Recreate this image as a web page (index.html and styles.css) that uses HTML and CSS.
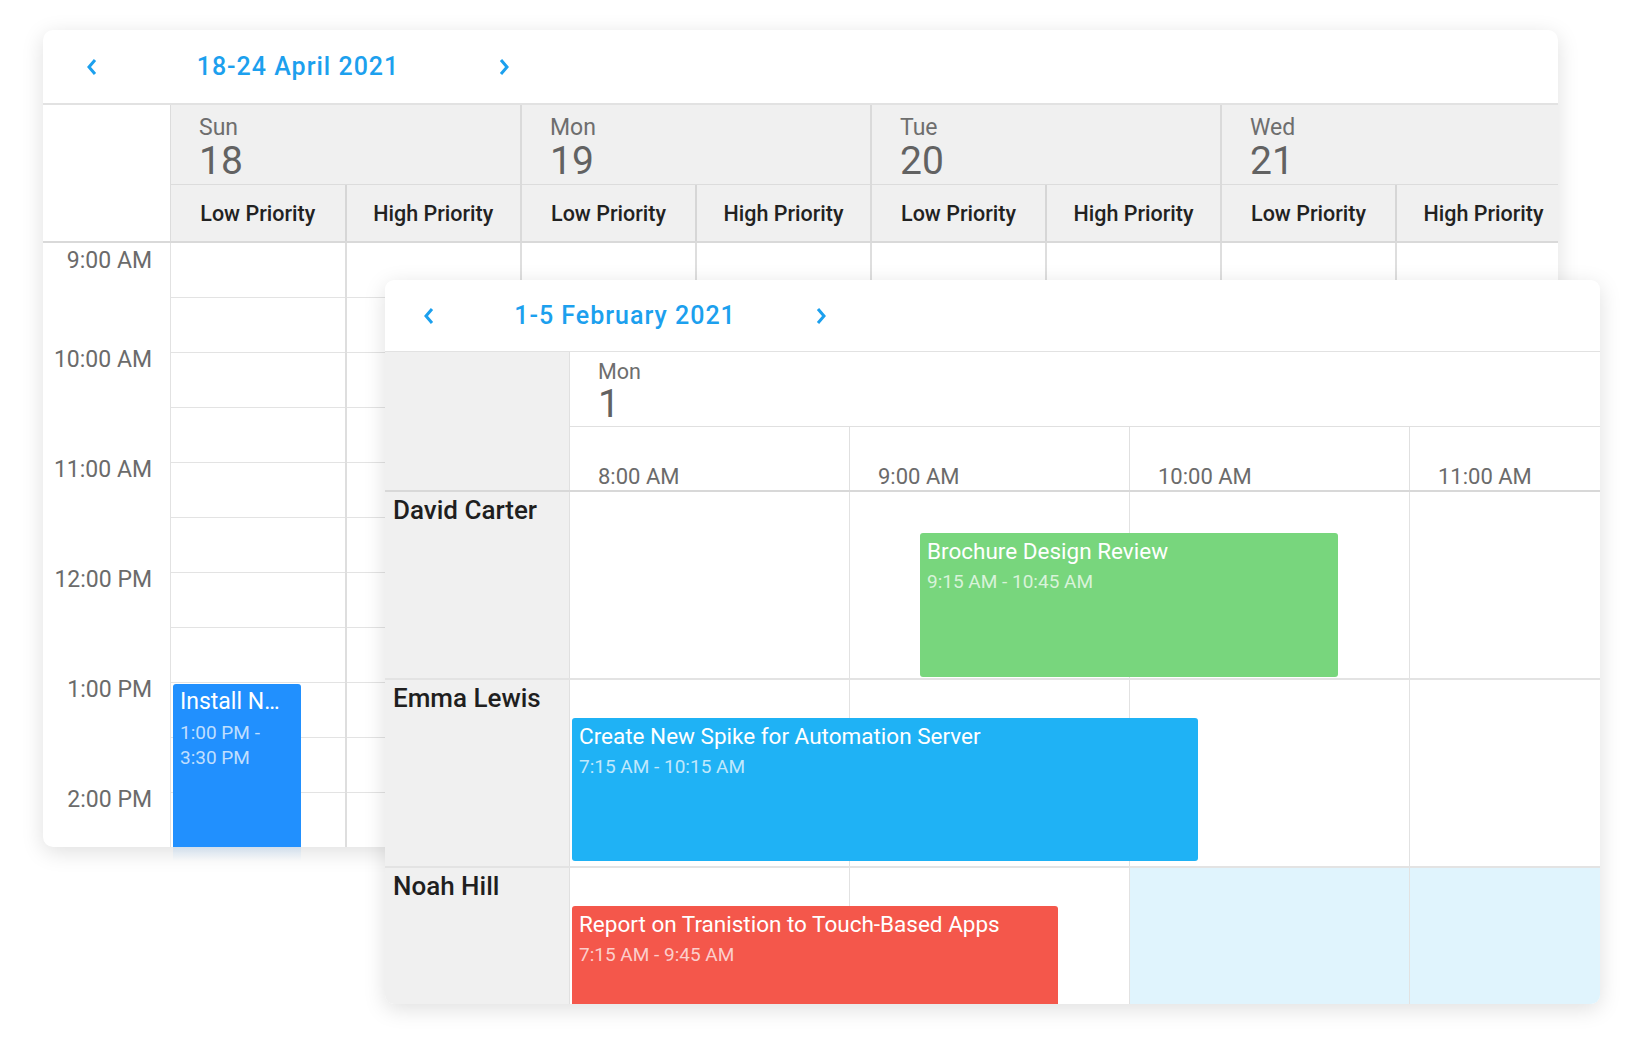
FILE: index.html
```html
<!DOCTYPE html>
<html lang="en">
<head>
<meta charset="utf-8">
<title>Scheduler</title>
<link rel="stylesheet" href="styles.css">
</head>
<body>
<div class="card back">
  <div class="nav">
    <span class="arrow"><svg viewBox="0 0 12 18"><polyline points="9,2 3,9 9,16"/></svg></span>
    <span class="title">18-24 April 2021</span>
    <span class="arrow"><svg viewBox="0 0 12 18"><polyline points="3,2 9,9 3,16"/></svg></span>
  </div>
  <div class="week-head">
    <div class="corner"></div>
    <div class="day-group first">
      <div class="day-date"><div class="dname">Sun</div><div class="dnum">18</div></div>
      <div class="prios"><div class="prio">Low Priority</div><div class="prio">High Priority</div></div>
    </div>
    <div class="day-group">
      <div class="day-date"><div class="dname">Mon</div><div class="dnum">19</div></div>
      <div class="prios"><div class="prio">Low Priority</div><div class="prio">High Priority</div></div>
    </div>
    <div class="day-group">
      <div class="day-date"><div class="dname">Tue</div><div class="dnum">20</div></div>
      <div class="prios"><div class="prio">Low Priority</div><div class="prio">High Priority</div></div>
    </div>
    <div class="day-group">
      <div class="day-date"><div class="dname">Wed</div><div class="dnum">21</div></div>
      <div class="prios"><div class="prio">Low Priority</div><div class="prio">High Priority</div></div>
    </div>
  </div>
  <div class="week-body">
    <div class="gutter">
      <div class="hour first"><span>9:00 AM</span></div>
      <div class="hour"><span>10:00 AM</span></div>
      <div class="hour"><span>11:00 AM</span></div>
      <div class="hour"><span>12:00 PM</span></div>
      <div class="hour"><span>1:00 PM</span></div>
      <div class="hour"><span>2:00 PM</span></div>
    </div>
    <div class="wcol first">
      <div class="slot"></div><div class="slot"></div><div class="slot"></div><div class="slot"></div><div class="slot"></div><div class="slot"></div><div class="slot"></div><div class="slot"></div><div class="slot"></div><div class="slot"></div><div class="slot"></div>
      <div class="ev ev-install" style="top:441px;left:2px;width:128px;height:200px">
        <div class="ev-title">Install N…</div>
        <div class="ev-time">1:00 PM - 3:30 PM</div>
      </div>
    </div>
    <div class="wcol"><div class="slot"></div><div class="slot"></div><div class="slot"></div><div class="slot"></div><div class="slot"></div><div class="slot"></div><div class="slot"></div><div class="slot"></div><div class="slot"></div><div class="slot"></div><div class="slot"></div></div>
    <div class="wcol"><div class="slot"></div><div class="slot"></div><div class="slot"></div><div class="slot"></div><div class="slot"></div><div class="slot"></div><div class="slot"></div><div class="slot"></div><div class="slot"></div><div class="slot"></div><div class="slot"></div></div>
    <div class="wcol"><div class="slot"></div><div class="slot"></div><div class="slot"></div><div class="slot"></div><div class="slot"></div><div class="slot"></div><div class="slot"></div><div class="slot"></div><div class="slot"></div><div class="slot"></div><div class="slot"></div></div>
    <div class="wcol"><div class="slot"></div><div class="slot"></div><div class="slot"></div><div class="slot"></div><div class="slot"></div><div class="slot"></div><div class="slot"></div><div class="slot"></div><div class="slot"></div><div class="slot"></div><div class="slot"></div></div>
    <div class="wcol"><div class="slot"></div><div class="slot"></div><div class="slot"></div><div class="slot"></div><div class="slot"></div><div class="slot"></div><div class="slot"></div><div class="slot"></div><div class="slot"></div><div class="slot"></div><div class="slot"></div></div>
    <div class="wcol"><div class="slot"></div><div class="slot"></div><div class="slot"></div><div class="slot"></div><div class="slot"></div><div class="slot"></div><div class="slot"></div><div class="slot"></div><div class="slot"></div><div class="slot"></div><div class="slot"></div></div>
    <div class="wcol"><div class="slot"></div><div class="slot"></div><div class="slot"></div><div class="slot"></div><div class="slot"></div><div class="slot"></div><div class="slot"></div><div class="slot"></div><div class="slot"></div><div class="slot"></div><div class="slot"></div></div>
  </div>
</div>
<div class="ev-fade"></div>

<div class="card front">
  <div class="nav">
    <span class="arrow"><svg viewBox="0 0 12 18"><polyline points="9,2 3,9 9,16"/></svg></span>
    <span class="title">1-5 February 2021</span>
    <span class="arrow"><svg viewBox="0 0 12 18"><polyline points="3,2 9,9 3,16"/></svg></span>
  </div>
  <div class="tl-head">
    <div class="res-corner"></div>
    <div class="tl-head-main">
      <div class="tl-date"><div class="dname">Mon</div><div class="dnum">1</div></div>
      <div class="tl-times">
        <div class="tl-time">8:00 AM</div>
        <div class="tl-time">9:00 AM</div>
        <div class="tl-time">10:00 AM</div>
        <div class="tl-time">11:00 AM</div>
      </div>
    </div>
  </div>
  <div class="res-row">
    <div class="res-name">David Carter</div>
    <div class="res-cells">
      <div class="cell"></div><div class="cell"></div><div class="cell"></div><div class="cell"></div>
      <div class="ev ev-green" style="left:350px;top:41px;width:418px;height:144px">
        <div class="ev-title">Brochure Design Review</div>
        <div class="ev-time">9:15 AM - 10:45 AM</div>
      </div>
    </div>
  </div>
  <div class="res-row">
    <div class="res-name">Emma Lewis</div>
    <div class="res-cells">
      <div class="cell"></div><div class="cell"></div><div class="cell"></div><div class="cell"></div>
      <div class="ev ev-blue" style="left:2px;top:38px;width:626px;height:143px">
        <div class="ev-title">Create New Spike for Automation Server</div>
        <div class="ev-time">7:15 AM - 10:15 AM</div>
      </div>
    </div>
  </div>
  <div class="res-row last">
    <div class="res-name">Noah Hill</div>
    <div class="res-cells">
      <div class="cell"></div><div class="cell"></div><div class="cell off"></div><div class="cell off"></div>
      <div class="ev ev-red" style="left:2px;top:38px;width:486px;height:200px">
        <div class="ev-title">Report on Tranistion to Touch-Based Apps</div>
        <div class="ev-time">7:15 AM - 9:45 AM</div>
      </div>
    </div>
  </div>
</div>
</body>
</html>
```
FILE: styles.css
```css
* { box-sizing: border-box; margin: 0; padding: 0; }
html, body { background: #fff; }
body {
  margin: 0;
  width: 1640px;
  height: 1040px;
  position: relative;
  overflow: hidden;
  font-family: Roboto, "Liberation Sans", sans-serif;
}
.card {
  position: absolute;
  background: #fff;
  border-radius: 10px;
  overflow: hidden;
  box-shadow: 0 5px 22px rgba(0, 0, 0, 0.13);
}
.back { left: 43px; top: 30px; width: 1515px; height: 817px; }
.front { left: 385px; top: 280px; width: 1215px; height: 724px; border-radius: 9px; }

/* faint reflection of the clipped event under the back card */
.ev-fade {
  position: absolute;
  left: 173px;
  top: 847px;
  width: 128px;
  height: 14px;
  background: linear-gradient(rgba(33, 144, 254, 0.12), rgba(33, 144, 254, 0));
}

/* navigator */
.nav {
  display: grid;
  align-items: center;
  border-bottom: 2px solid #e2e2e2;
}
.back .nav { height: 75px; grid-template-columns: 24px 388px 24px; padding-left: 37px; }
.front .nav { height: 72px; grid-template-columns: 24px 368px 24px; padding-left: 32px; border-bottom-width: 1px; }
.arrow { display: flex; justify-content: center; align-items: center; }
.arrow svg { width: 12px; height: 18px; fill: none; stroke: #1ca0ee; stroke-width: 3; }
.title {
  text-align: center;
  color: #1ca0ee;
  font-size: 25px;
  font-weight: 500;
  letter-spacing: 1px;
  line-height: 30px;
}

/* week header */
.week-head { display: flex; height: 138px; border-bottom: 2px solid #d9d9d9; }
.corner { width: 127px; flex: none; }
.day-group {
  width: 350px;
  flex: none;
  display: flex;
  flex-direction: column;
  background: #f0f0f0;
  border-left: 2px solid #dadada;
}
.day-group.first { border-left: 1px solid #dcdcdc; }
.day-date { height: 80px; border-bottom: 1px solid #dcdcdc; padding: 10px 0 0 28px; }
.dname { font-size: 23px; line-height: 26px; color: #6e6e6e; }
.dnum { font-size: 39px; line-height: 40px; color: #626262; }
.prios { flex: 1; display: flex; }
.prio {
  flex: 1;
  display: flex;
  align-items: center;
  justify-content: center;
  font-size: 21.5px;
  font-weight: 500;
  color: #222;
}
.prio + .prio { border-left: 2px solid #d6d6d6; }

/* week body */
.week-body { display: flex; }
.gutter { width: 127px; flex: none; }
.hour { height: 110px; display: flex; flex-direction: column; }
.hour span {
  display: block;
  text-align: right;
  padding-right: 18px;
  font-size: 23px;
  line-height: 24px;
  color: #6b6b6b;
  margin-top: -5px;
}
.hour.first span { margin-top: 6px; }
.wcol { width: 175px; flex: none; position: relative; border-left: 2px solid #dedede; }
.wcol.first { border-left: 1px solid #e2e2e2; }
.slot { height: 55px; border-bottom: 1px solid #e3e3e3; }

/* events */
.ev {
  position: absolute;
  border-radius: 3px;
  color: #fff;
  padding: 5px 7px;
  overflow: hidden;
}
.ev-title {
  font-size: 22.5px;
  line-height: 26px;
  white-space: nowrap;
}
.ev-time { font-size: 19px; line-height: 22px; margin-top: 7px; color: rgba(255, 255, 255, 0.72); }
.ev-install { background: #2190fe; }
.ev-install .ev-title { font-size: 23px; }
.ev-install .ev-time { font-size: 19px; line-height: 25px; margin-top: 5px; }
.ev-green { background: #78d67d; }
.ev-blue { background: #1fb2f5; }
.ev-red { background: #f4574b; }

/* timeline header */
.tl-head { display: flex; height: 140px; border-bottom: 2px solid #d8d8d8; }
.res-corner { width: 185px; flex: none; background: #f0f0f0; border-right: 1px solid #e0e0e0; }
.tl-head-main { flex: 1; display: flex; flex-direction: column; }
.tl-date { height: 75px; border-bottom: 1px solid #e0e0e0; padding: 7px 0 0 28px; }
.tl-date .dname { font-size: 21.5px; line-height: 25px; }
.tl-times { flex: 1; display: flex; }
.tl-time {
  width: 280px;
  flex: none;
  border-right: 1px solid #e0e0e0;
  display: flex;
  align-items: flex-end;
  padding: 0 0 0 28px;
  font-size: 22px;
  line-height: 26px;
  color: #6b6b6b;
}

/* timeline rows */
.res-row { display: flex; height: 188px; border-bottom: 2px solid #e3e3e3; }
.res-row.last { height: 260px; border-bottom: 0; }
.res-name {
  width: 185px;
  flex: none;
  background: #f0f0f0;
  border-right: 1px solid #e0e0e0;
  font-size: 26px;
  font-weight: 500;
  line-height: 30px;
  padding: 3px 0 0 8px;
  color: #1f1f1f;
}
.res-cells { flex: 1; display: flex; position: relative; }
.cell { width: 280px; flex: none; border-right: 1px solid #e2e2e2; }
.cell.off { background: #e0f4fd; }
```
